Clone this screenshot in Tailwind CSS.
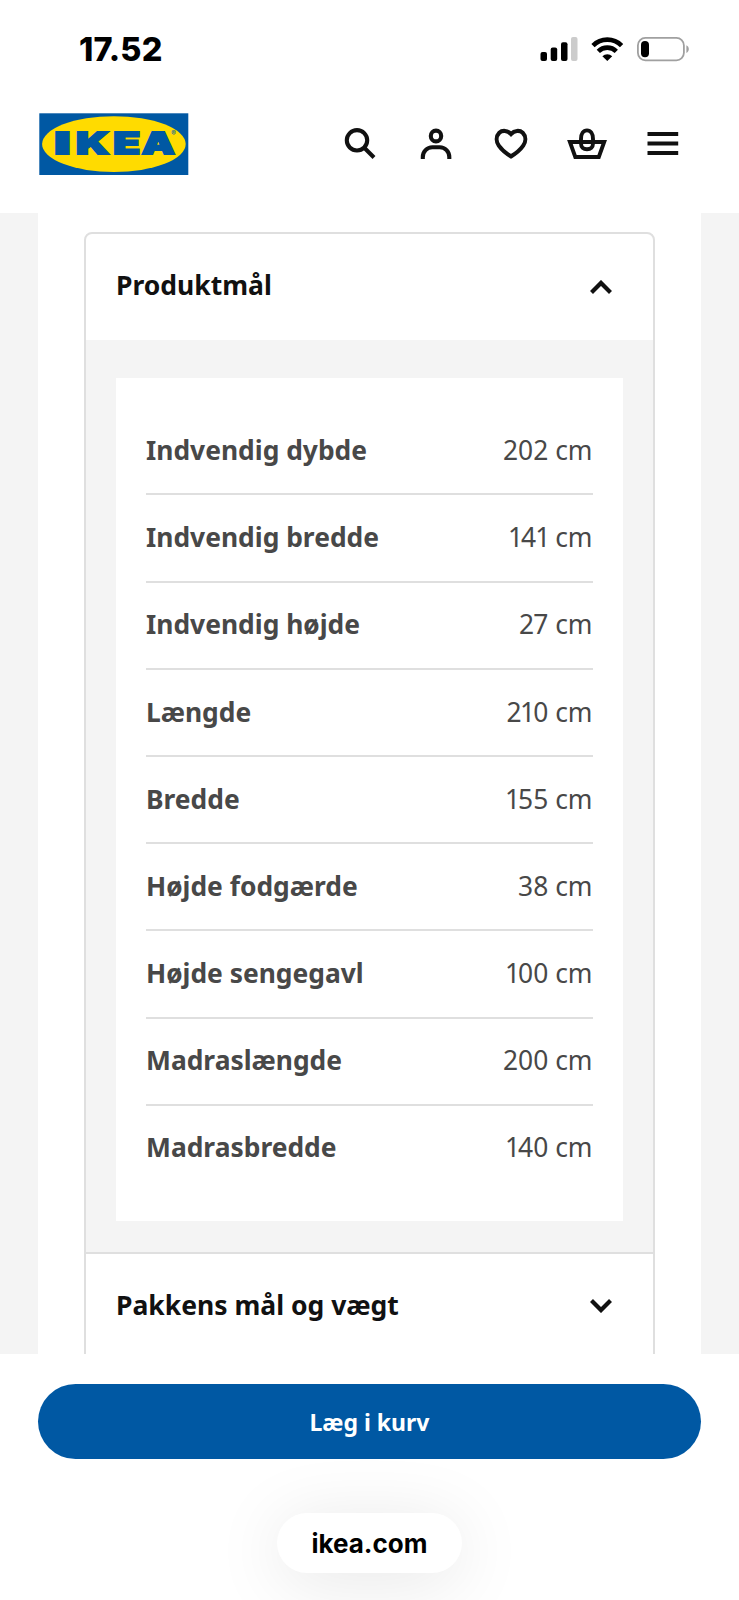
<!DOCTYPE html>
<html lang="da">
<head>
<meta charset="utf-8">
<title>Produktmål</title>
<script src="https://cdn.jsdelivr.net/npm/@tailwindcss/browser@4"></script>
</head>
<body class="w-[739px] h-[1600px] overflow-hidden bg-white flex flex-col font-['Noto_Sans',sans-serif] text-[#111]">
  <!-- Status bar -->
  <div class="h-[98px] shrink-0 flex items-start justify-between pl-[79px] pr-[49px] text-black">
    <div class="mt-[30px] text-[32.5px] leading-[40px] font-extrabold tracking-[0.2px] font-['Inter',sans-serif]">17.52</div>
    <svg class="mt-[35px] w-[152px] h-[28px]" viewBox="0 0 152 28">
      <rect x="2.5" y="17" width="6.5" height="9" rx="2"/>
      <rect x="12.7" y="12.5" width="6.5" height="13.5" rx="2"/>
      <rect x="23" y="7.2" width="6.5" height="18.8" rx="2"/>
      <rect x="33" y="2" width="6.5" height="24" rx="2" fill="#ccc"/>
      <g fill="none" stroke="#000" stroke-width="4.6">
        <path d="M55 10.6a20.2 20.2 0 0 1 28.6 0"/>
        <path d="M60.3 16.3a12.8 12.8 0 0 1 18 0"/>
      </g>
      <path d="M69.3 26.1l-4.9-4.9a7 7 0 0 1 9.8 0z"/>
      <rect x="99.9" y="2.9" width="46" height="22.4" rx="7.5" fill="none" stroke="#a0a0a0" stroke-width="1.8"/>
      <rect x="103" y="6" width="8" height="16.2" rx="4"/>
      <path d="M148.4 10.3c3.2 1.3 3.2 6.3 0 7.6z" fill="#a0a0a0"/>
    </svg>
  </div>
  <!-- Site header -->
  <header class="h-[115px] shrink-0 flex items-start justify-between pl-[39px] pr-[53px]">
    <svg class="mt-[15px] w-[150px] h-[62px]" viewBox="39 113 150 62">
      <rect x="39.3" y="113.3" width="149" height="61.7" fill="#0058a3"/>
      <ellipse cx="113.900" cy="144.1" rx="71.8" ry="27.9" fill="#ffdb00"/>
      <g fill="#0058a3" stroke="#0058a3" font-family="Inter" font-weight="900" font-size="29.3" text-anchor="middle" stroke-width="1.8">
        <text transform="translate(62.4 154.2) scale(1.9 1)">I</text>
        <text transform="translate(92.8 154.2) scale(1.5 1)">K</text>
        <text transform="translate(126.6 154.2) scale(1.5 1)">E</text>
        <text transform="translate(158.4 154.2) scale(1.42 1)">A</text>
        <text transform="translate(173.5 136.4)" font-size="7" font-weight="500" stroke="none">®</text>
      </g>
    </svg>
    <nav class="mt-[23px] flex gap-[29.8px]">
      <svg class="w-[46px] h-[46px]" viewBox="0 0 46 46" fill="none" stroke="#111" stroke-width="4.1"><circle cx="20" cy="19.3" r="10.2"/><path d="M27 26.5L37 36.5"/></svg>
      <svg class="w-[46px] h-[46px]" viewBox="0 0 46 46" fill="none" stroke="#111" stroke-width="4.1"><ellipse cx="23" cy="15" rx="5.2" ry="5.4"/><path d="M9.8 38v-2c0-5.400 4.2-9.800 9.500-9.800h7.500c5.300 0 9.500 4.400 9.500 9.800v2"/></svg>
      <svg class="w-[46px] h-[46px]" viewBox="0 0 46 46" fill="none" stroke="#111" stroke-width="4.1"><path d="M23 13C19.500 9.300 14.300 9 11.300 11.800C8 15.200 7.900 20.500 10.800 24.700C13.500 28.600 18.500 32.800 23 35.400C27.500 32.800 32.500 28.600 35.200 24.700C38.100 20.500 38 15.200 34.700 11.800C31.700 9 26.500 9.300 23 13Z"/></svg>
      <svg class="w-[46px] h-[46px]" viewBox="0 0 46 46" fill="none" stroke="#111" stroke-width="3.9"><path d="M5.900 21h34.300L34.800 36H11.300Z"/><path d="M17 18c0-5.500 2.400-8.600 6-8.600s6 3.100 6 8.600v4.500c0 3.600-2.400 5.800-6 5.800s-6-2.200-6-5.800z"/></svg>
      <svg class="w-[46px] h-[46px]" viewBox="0 0 46 46" fill="none" stroke="#111" stroke-width="3.8"><path d="M7.500 13h30.700M7.500 22.500h30.700M7.500 32h30.700"/></svg>
    </nav>
  </header>
  <!-- Product content -->
  <main class="h-[1141px] shrink-0 overflow-hidden bg-[#f4f4f4] px-[38px]">
    <div class="h-full bg-white pl-[46px] pr-[46px] pt-[19px]">
      <div class="h-[1180px] border-2 border-[#dfdfdf] rounded-lg overflow-hidden">
        <div class="h-[106px] flex items-start justify-between pl-[30px] pr-[41px]">
          <h2 class="mt-[31px] text-[26.5px] font-bold leading-[40px]">Produktmål</h2>
          <svg class="w-[22px] h-[14px] mt-[46px]" viewBox="0 0 22 14" fill="none" stroke="#111" stroke-width="4.2"><path d="M1.500 12.400L11 2.900l9.500 9.500"/></svg>
        </div>
        <div class="h-[912px] bg-[#f4f4f4] pl-[30px] pr-[30px] pt-[38px]">
          <dl class="h-[843px] bg-white px-[30px] pt-[30.2px] text-[26.4px] text-[#484848]">
            <div class="h-[87.2px] border-b-2 border-[#dfdfdf] flex items-center justify-between"><dt class="font-bold">Indvendig dybde</dt><dd class="pr-[0.5px]">202 cm</dd></div>
            <div class="h-[87.2px] border-b-2 border-[#dfdfdf] flex items-center justify-between"><dt class="font-bold">Indvendig bredde</dt><dd class="pr-[0.5px]"><span class="-ml-px -mr-[2px]">1</span>4<span class="-ml-px -mr-[2px]">1</span> cm</dd></div>
            <div class="h-[87.2px] border-b-2 border-[#dfdfdf] flex items-center justify-between"><dt class="font-bold">Indvendig højde</dt><dd class="pr-[0.5px]">2<span class="-ml-px">7</span> cm</dd></div>
            <div class="h-[87.2px] border-b-2 border-[#dfdfdf] flex items-center justify-between"><dt class="font-bold">Længde</dt><dd class="pr-[0.5px]">2<span class="-ml-[1.5px] -mr-[2px]">1</span>0 cm</dd></div>
            <div class="h-[87.2px] border-b-2 border-[#dfdfdf] flex items-center justify-between"><dt class="font-bold">Bredde</dt><dd class="pr-[0.5px]"><span class="-mr-[2px]">1</span>55 cm</dd></div>
            <div class="h-[87.2px] border-b-2 border-[#dfdfdf] flex items-center justify-between"><dt class="font-bold">Højde fodgærde</dt><dd class="pr-[0.5px]">38 cm</dd></div>
            <div class="h-[87.2px] border-b-2 border-[#dfdfdf] flex items-center justify-between"><dt class="font-bold">Højde sengegavl</dt><dd class="pr-[0.5px]"><span class="-mr-[2px]">1</span>00 cm</dd></div>
            <div class="h-[87.2px] border-b-2 border-[#dfdfdf] flex items-center justify-between"><dt class="font-bold">Madraslængde</dt><dd class="pr-[0.5px]">200 cm</dd></div>
            <div class="h-[87.2px] border-b-2 border-transparent flex items-center justify-between"><dt class="font-bold">Madrasbredde</dt><dd class="pr-[0.5px]"><span class="-mr-[2px]">1</span>40 cm</dd></div>
          </dl>
        </div>
        <div class="h-[108px] border-t-2 border-[#dfdfdf] flex items-start justify-between pl-[30px] pr-[41px]">
          <h2 class="mt-[31px] text-[26.5px] font-bold leading-[40px]">Pakkens mål og vægt</h2>
          <svg class="mt-[45px] w-[22px] h-[14px]" viewBox="0 0 22 14" fill="none" stroke="#111" stroke-width="4.2"><path d="M1.500 1.600L11 11.100l9.500-9.500"/></svg>
        </div>
      </div>
    </div>
  </main>
  <!-- Sticky purchase bar and browser address -->
  <footer class="flex-1 flex flex-col items-center px-[38px] pt-[30px]">
    <button class="w-full h-[75px] shrink-0 rounded-full bg-[#0058a3] text-white text-[23px] font-bold pt-px">Læg i kurv</button>
    <div class="mt-[54px] w-[185px] h-[60px] shrink-0 rounded-full bg-white shadow-[0_8px_70px_rgba(0,0,0,0.1)] flex items-center justify-center font-['Inter',sans-serif] font-bold text-[26px] text-black">ikea.com</div>
  </footer>
</body>
</html>
